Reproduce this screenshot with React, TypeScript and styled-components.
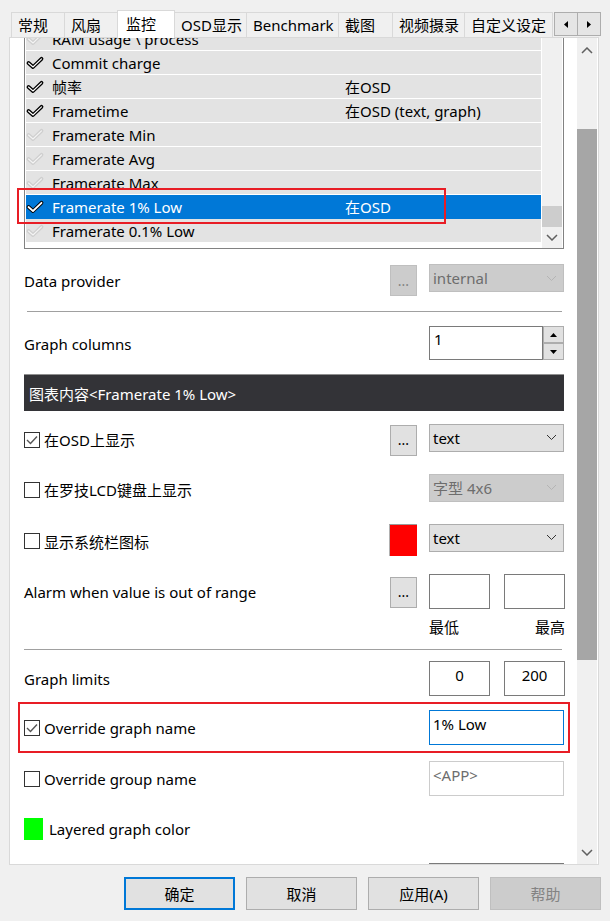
import React from "react";
import styled, { createGlobalStyle, css } from "styled-components";

const FONT = `"Noto Sans", "Noto Sans CJK SC", sans-serif`;

const GlobalStyle = createGlobalStyle`
  * { box-sizing: border-box; }
  html, body { margin: 0; padding: 0; background: #f0f0f0; }
  body { font-family: ${FONT}; font-size: 15px; color: #000; }
`;

const Window = styled.div`
  width: 610px;
  height: 921px;
  display: flex;
  flex-direction: column;
  background: #f0f0f0;
  overflow: hidden;
`;

/* ---------- tabs ---------- */
const TabStrip = styled.div`
  flex: none;
  height: 37px;
  display: flex;
  align-items: flex-end;
  padding-left: 11px;
  position: relative;
  z-index: 2;
`;

const Tab = styled.div<{ $w: number; $active?: boolean }>`
  flex: none;
  width: ${(p) => p.$w}px;
  height: 25px;
  margin-left: -1px;
  &:first-child { margin-left: 0; }
  padding-left: 6px;
  display: flex;
  align-items: center;
  border: 1px solid #d9d9d9;
  border-bottom: none;
  background: #f0f0f0;
  white-space: nowrap;
  overflow: hidden;
  line-height: 1;
  ${(p) =>
    p.$active &&
    css`
      height: 28px;
      margin-bottom: -1px;
      padding-left: 8px;
      background: #fff;
      position: relative;
      z-index: 1;
    `}
`;

const TabScroller = styled.div`
  display: flex;
  margin-left: 1px;
  margin-bottom: 1px;
`;

const TabArrow = styled.div`
  width: 24px;
  height: 24px;
  border: 1px solid #adadad;
  background: #e5e5e5;
  display: flex;
  align-items: center;
  justify-content: center;
  & + & { margin-left: -1px; }
`;

/* ---------- panel ---------- */
const Panel = styled.div`
  flex: none;
  height: 828px;
  margin: 0 11px 0 9px;
  border: 1px solid #d9d9d9;
  background: #fff;
  display: flex;
  padding-right: 1px;
  overflow: hidden;
`;

const Viewport = styled.div`
  flex: 1;
  min-width: 0;
  overflow: hidden;
`;

const Content = styled.div`
  padding: 0 13px 0 14px;
  display: flex;
  flex-direction: column;
`;

const VScroll = styled.div<{ $w: number }>`
  flex: none;
  width: ${(p) => p.$w}px;
  background: #f0f0f0;
  display: flex;
  flex-direction: column;
`;

const ScrollBtn = styled.div<{ $h: number }>`
  flex: none;
  height: ${(p) => p.$h}px;
  display: flex;
  align-items: center;
  justify-content: center;
`;

const ScrollTrack = styled.div`
  flex: 1;
  min-height: 0;
  display: flex;
  flex-direction: column;
  overflow: hidden;
`;

const ScrollThumb = styled.div<{ $top: number; $h: number; $color: string }>`
  flex: none;
  margin-top: ${(p) => p.$top}px;
  height: ${(p) => p.$h}px;
  background: ${(p) => p.$color};
`;

/* ---------- list ---------- */
const ListBox = styled.div`
  flex: none;
  margin-top: -60px;
  height: 271px;
  border: 1px solid #828282;
  background: #fff;
  display: flex;
  padding: 0 1px;
  position: relative;
`;

/* rows scrolled out above the visible part of the list */
const ListRows = styled.div<{ $scrolled: number }>`
  flex: 1;
  min-width: 0;
  margin-right: 1px;
  padding-top: ${(p) => p.$scrolled}px;
  display: flex;
  flex-direction: column;
`;

const ListRow = styled.div<{ $sel?: boolean }>`
  flex: none;
  height: 24px;
  display: flex;
  align-items: center;
  padding-left: 1px;
  white-space: nowrap;
  background: ${(p) => (p.$sel ? "#0078d7" : "#e3e3e3")};
  color: ${(p) => (p.$sel ? "#fff" : "#000")};
  border-bottom: 1px solid ${(p) => (p.$sel ? "#0078d7" : "#fff")};
`;

const CheckSlot = styled.span`
  flex: none;
  width: 16px;
  margin-right: 9px;
  display: flex;
  align-items: center;
`;

const NameCell = styled.span`
  flex: none;
  width: 293px;
  overflow: hidden;
`;

const ValueCell = styled.span`
  flex: 1;
  overflow: hidden;
`;

const Highlight = styled.div`
  position: absolute;
  left: -8px;
  top: 209px;
  width: 429px;
  height: 36px;
  border: 2px solid #e81d25;
  pointer-events: none;
`;

/* ---------- form ---------- */
const FormRow = styled.div<{ $h: number; $pt?: number; $end?: boolean; $top?: boolean }>`
  flex: none;
  height: ${(p) => p.$h}px;
  padding-top: ${(p) => p.$pt ?? 0}px;
  display: flex;
  align-items: ${(p) => (p.$top ? "flex-start" : "center")};
  justify-content: ${(p) => (p.$end ? "flex-end" : "space-between")};
`;

const HighlightRow = styled(FormRow)`
  margin: 0 -6px;
  padding: 0 4px;
  border: 2px solid #e81d25;
`;

const FieldLabel = styled.div<{ $pt?: number; $gap?: number }>`
  display: flex;
  align-items: center;
  gap: ${(p) => p.$gap ?? 4}px;
  padding-top: ${(p) => p.$pt ?? 1}px;
  white-space: nowrap;
`;

const Divider = styled.div<{ $ml: number; $mr: number }>`
  flex: none;
  height: 1px;
  background: #a0a0a0;
  margin: 0 ${(p) => p.$mr}px 0 ${(p) => p.$ml}px;
`;

const SectionBar = styled.div`
  flex: none;
  height: 37px;
  background: #333337;
  border-top: 1px solid #8f8f8f;
  color: #fff;
  display: flex;
  align-items: center;
  padding-left: 5px;
  white-space: nowrap;
`;

const Controls = styled.div<{ $gap?: number }>`
  display: flex;
  align-items: flex-start;
  gap: ${(p) => p.$gap ?? 12}px;
`;

const DotsButton = styled.div<{ $mt?: number; $disabled?: boolean }>`
  flex: none;
  width: 27px;
  height: 31px;
  margin-top: ${(p) => p.$mt ?? 1}px;
  border: 1px solid ${(p) => (p.$disabled ? "#bfbfbf" : "#adadad")};
  background: ${(p) => (p.$disabled ? "#cccccc" : "#e1e1e1")};
  color: ${(p) => (p.$disabled ? "#838383" : "#000")};
  display: flex;
  align-items: center;
  justify-content: center;
  font-size: 14px;
  line-height: 1;
`;

const DropDown = styled.div<{ $disabled?: boolean }>`
  flex: none;
  width: 135px;
  height: 28px;
  border: 1px solid ${(p) => (p.$disabled ? "#bfbfbf" : "#adadad")};
  background: ${(p) => (p.$disabled ? "#cccccc" : "#e1e1e1")};
  color: ${(p) => (p.$disabled ? "#6d6d6d" : "#000")};
  display: flex;
  align-items: center;
  justify-content: space-between;
  padding: 0 6px 0 3px;
  white-space: nowrap;
`;

const ColorSwatch = styled.div<{ $color: string; $w: number; $h: number; $edge?: boolean }>`
  flex: none;
  width: ${(p) => p.$w}px;
  height: ${(p) => p.$h}px;
  background: ${(p) => p.$color};
  ${(p) =>
    p.$edge &&
    css`
      border-top: 1px solid #9a9a9a;
      border-left: 1px solid #b0b0b0;
    `}
`;

const SpinBox = styled.div`
  flex: none;
  width: 135px;
  height: 34px;
  display: flex;
`;

const SpinField = styled.div`
  flex: 1;
  border: 1px solid #7a7a7a;
  background: #fff;
  padding: 2px 4px 0;
  line-height: 20px;
`;

const SpinButtons = styled.div`
  flex: none;
  width: 21px;
  display: flex;
  flex-direction: column;
`;

const SpinBtn = styled.div`
  flex: 1;
  border: 1px solid #adadad;
  background: #e1e1e1;
  display: flex;
  align-items: center;
  justify-content: center;
`;

const TextBox = styled.div<{ $w: number; $center?: boolean; $focus?: boolean; $disabled?: boolean }>`
  flex: none;
  width: ${(p) => p.$w}px;
  height: 35px;
  border: 1px solid ${(p) => (p.$focus ? "#0078d7" : p.$disabled ? "#cccccc" : "#7a7a7a")};
  background: #fff;
  color: ${(p) => (p.$disabled ? "#6d6d6d" : "#000")};
  padding: 3px 3px 0;
  line-height: 20px;
  text-align: ${(p) => (p.$center ? "center" : "left")};
  white-space: nowrap;
`;

const Pair = styled.div`
  display: flex;
  gap: 14px;
  margin-right: -1px;
`;

const RangeLabels = styled.div`
  width: 136px;
  margin-right: -1px;
  display: flex;
  justify-content: space-between;
  line-height: 20px;
`;

const CheckBox = styled.span`
  flex: none;
  width: 16px;
  height: 16px;
  border: 1px solid #333;
  background: #fff;
  display: inline-flex;
  align-items: center;
  justify-content: center;
`;

/* ---------- bottom buttons ---------- */
const ButtonBar = styled.div`
  flex: none;
  display: flex;
  justify-content: flex-end;
  gap: 11px;
  padding: 12px 9px 0 0;
`;

const DlgButton = styled.div<{ $primary?: boolean; $disabled?: boolean }>`
  flex: none;
  width: 111px;
  height: 33px;
  border: ${(p) => (p.$primary ? "2px solid #0078d7" : p.$disabled ? "1px solid #bfbfbf" : "1px solid #adadad")};
  background: ${(p) => (p.$disabled ? "#cccccc" : "#e1e1e1")};
  color: ${(p) => (p.$disabled ? "#838383" : "#000")};
  display: flex;
  align-items: center;
  justify-content: center;
  line-height: 1.2;
`;

/* ---------- drawings ---------- */
const Chevron: React.FC<{ up?: boolean; color?: string; w?: number; sw?: number }> = ({
  up,
  color = "#606060",
  w = 10,
  sw = 1.5,
}) => {
  const h = w / 2;
  return (
    <svg width={w + 2} height={h + 2} viewBox={`-1 -1 ${w + 2} ${h + 2}`}>
      <polyline
        points={up ? `0,${h} ${w / 2},0 ${w},${h}` : `0,0 ${w / 2},${h} ${w},0`}
        fill="none"
        stroke={color}
        strokeWidth={sw}
      />
    </svg>
  );
};

const Tri: React.FC<{ dir: "up" | "down" | "left" | "right" }> = ({ dir }) => {
  const pts = {
    up: "0,4 3.5,0 7,4",
    down: "0,0 3.5,4 7,0",
    left: "4,0 0,3.5 4,7",
    right: "0,0 4,3.5 0,7",
  }[dir];
  const horiz = dir === "up" || dir === "down";
  return (
    <svg width={horiz ? 7 : 4} height={horiz ? 4 : 7} viewBox={horiz ? "0 0 7 4" : "0 0 4 7"}>
      <polygon points={pts} fill="#000" />
    </svg>
  );
};

const RowCheck: React.FC<{ on: boolean; sel?: boolean }> = ({ on, sel }) => {
  const d = "M1.5 6 L6 10 L14.5 1.8";
  return (
    <svg width="16" height="12" viewBox="0 0 16 12" style={{ overflow: "visible" }}>
      <path d={d} fill="none" stroke={on ? "#000" : "#cfcfcf"} strokeWidth={3.8} strokeLinecap="round" strokeLinejoin="round" />
      <path
        d={d}
        fill="none"
        stroke={on ? "#fff" : "#f4f4f4"}
        strokeWidth={sel ? 1.8 : 1.1}
        strokeLinecap="round"
        strokeLinejoin="round"
      />
    </svg>
  );
};

const BoxCheck: React.FC<{ on: boolean }> = ({ on }) => (
  <CheckBox>
    {on && (
      <svg width="12" height="10" viewBox="0 0 12 10">
        <polyline points="1,5 4.5,8.5 11,1.5" fill="none" stroke="#555" strokeWidth={1.4} />
      </svg>
    )}
  </CheckBox>
);

/* ---------- data ---------- */
const tabs: { label: string; w: number; active?: boolean }[] = [
  { label: "常规", w: 54 },
  { label: "风扇", w: 54 },
  { label: "监控", w: 58, active: true },
  { label: "OSD显示", w: 73 },
  { label: "Benchmark", w: 93 },
  { label: "截图", w: 55 },
  { label: "视频摄录", w: 73 },
  { label: "自定义设定", w: 89 },
];

const rows: { name: string; value?: string; on: boolean; sel?: boolean }[] = [
  { name: "RAM usage \\ process", on: false },
  { name: "Commit charge", on: true },
  { name: "帧率", value: "在OSD", on: true },
  { name: "Frametime", value: "在OSD (text, graph)", on: true },
  { name: "Framerate Min", on: false },
  { name: "Framerate Avg", on: false },
  { name: "Framerate Max", on: false },
  { name: "Framerate 1% Low", value: "在OSD", on: true, sel: true },
  { name: "Framerate 0.1% Low", on: false },
];

export default function App() {
  return (
    <Window>
      <GlobalStyle />
      <TabStrip>
        {tabs.map((t) => (
          <Tab key={t.label} $w={t.w} $active={t.active}>
            {t.label}
          </Tab>
        ))}
        <TabScroller>
          <TabArrow>
            <Tri dir="left" />
          </TabArrow>
          <TabArrow>
            <Tri dir="right" />
          </TabArrow>
        </TabScroller>
      </TabStrip>

      <Panel>
        <Viewport>
          <Content>
            <ListBox>
              <ListRows $scrolled={48}>
                {rows.map((r) => (
                  <ListRow key={r.name} $sel={r.sel}>
                    <CheckSlot>
                      <RowCheck on={r.on} sel={r.sel} />
                    </CheckSlot>
                    <NameCell>{r.name}</NameCell>
                    <ValueCell>{r.value ?? ""}</ValueCell>
                  </ListRow>
                ))}
              </ListRows>
              <VScroll $w={20}>
                <ScrollBtn $h={20}>
                  <Chevron up />
                </ScrollBtn>
                <ScrollTrack>
                  <ScrollThumb $top={207} $h={21} $color="#cdcdcd" />
                </ScrollTrack>
                <ScrollBtn $h={21}>
                  <Chevron />
                </ScrollBtn>
              </VScroll>
              <Highlight />
            </ListBox>

            <FormRow $h={62}>
              <FieldLabel>Data provider</FieldLabel>
              <Controls>
                <DotsButton $disabled>...</DotsButton>
                <DropDown $disabled>
                  internal
                  <Chevron color="#b4b4b4" w={9} sw={1} />
                </DropDown>
              </Controls>
            </FormRow>

            <Divider $ml={3} $mr={2} />

            <FormRow $h={62}>
              <FieldLabel>Graph columns</FieldLabel>
              <SpinBox>
                <SpinField>1</SpinField>
                <SpinButtons>
                  <SpinBtn>
                    <Tri dir="up" />
                  </SpinBtn>
                  <SpinBtn>
                    <Tri dir="down" />
                  </SpinBtn>
                </SpinButtons>
              </SpinBox>
            </FormRow>

            <SectionBar>图表内容&lt;Framerate 1% Low&gt;</SectionBar>

            <FormRow $h={57}>
              <FieldLabel $pt={0}>
                <BoxCheck on />
                在OSD上显示
              </FieldLabel>
              <Controls>
                <DotsButton>...</DotsButton>
                <DropDown>
                  text
                  <Chevron color="#333" w={9} sw={1} />
                </DropDown>
              </Controls>
            </FormRow>

            <FormRow $h={39}>
              <FieldLabel $pt={4}>
                <BoxCheck on={false} />
                在罗技LCD键盘上显示
              </FieldLabel>
              <DropDown $disabled>
                字型 4x6
                <Chevron color="#b4b4b4" w={9} sw={1} />
              </DropDown>
            </FormRow>

            <FormRow $h={65}>
              <FieldLabel $pt={3}>
                <BoxCheck on={false} />
                显示系统栏图标
              </FieldLabel>
              <Controls>
                <ColorSwatch $color="#ff0000" $w={28} $h={32} $edge />
                <DropDown>
                  text
                  <Chevron color="#333" w={9} sw={1} />
                </DropDown>
              </Controls>
            </FormRow>

            <FormRow $h={38}>
              <FieldLabel>Alarm when value is out of range</FieldLabel>
              <Controls>
                <DotsButton $mt={3}>...</DotsButton>
                <Pair>
                  <TextBox $w={61} />
                  <TextBox $w={61} />
                </Pair>
              </Controls>
            </FormRow>

            <FormRow $h={39} $pt={7} $end $top>
              <RangeLabels>
                <span>最低</span>
                <span>最高</span>
              </RangeLabels>
            </FormRow>

            <Divider $ml={0} $mr={2} />

            <FormRow $h={52} $pt={5}>
              <FieldLabel>Graph limits</FieldLabel>
              <Pair>
                <TextBox $w={61} $center>
                  0
                </TextBox>
                <TextBox $w={61} $center>
                  200
                </TextBox>
              </Pair>
            </FormRow>

            <HighlightRow $h={51}>
              <FieldLabel>
                <BoxCheck on />
                Override graph name
              </FieldLabel>
              <TextBox $w={135} $focus>
                1% Low
              </TextBox>
            </HighlightRow>

            <FormRow $h={50}>
              <FieldLabel>
                <BoxCheck on={false} />
                Override group name
              </FieldLabel>
              <TextBox $w={135} $disabled>
                &lt;APP&gt;
              </TextBox>
            </FormRow>

            <FormRow $h={52}>
              <FieldLabel $pt={0} $gap={6}>
                <ColorSwatch $color="#00ff00" $w={19} $h={22} />
                Layered graph color
              </FieldLabel>
            </FormRow>

            <FormRow $h={50} $end>
              <TextBox $w={135} />
            </FormRow>
          </Content>
        </Viewport>

        <VScroll $w={20}>
          <ScrollBtn $h={24}>
            <Chevron up />
          </ScrollBtn>
          <ScrollTrack>
            <ScrollThumb $top={67} $h={531} $color="#a6a6a6" />
          </ScrollTrack>
          <ScrollBtn $h={24}>
            <Chevron />
          </ScrollBtn>
        </VScroll>
      </Panel>

      <ButtonBar>
        <DlgButton $primary>确定</DlgButton>
        <DlgButton>取消</DlgButton>
        <DlgButton>应用(A)</DlgButton>
        <DlgButton $disabled>帮助</DlgButton>
      </ButtonBar>
    </Window>
  );
}
